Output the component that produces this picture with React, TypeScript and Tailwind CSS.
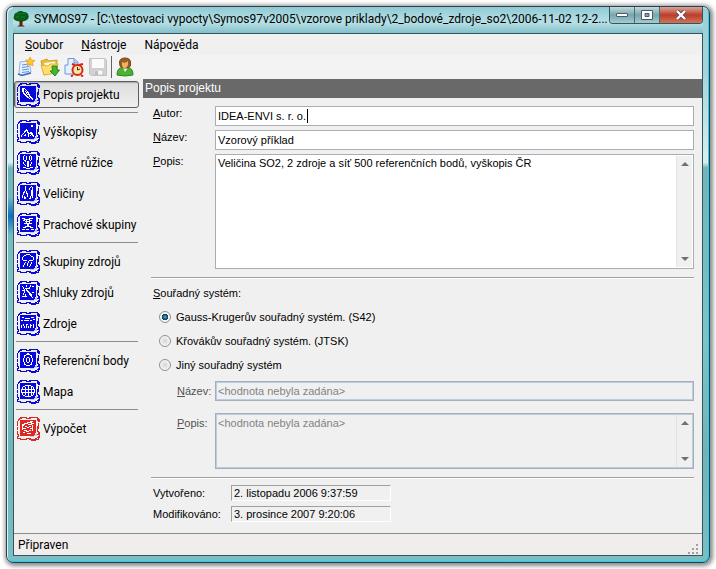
import { useState, type ReactNode } from "react";
import clsx from "clsx";

type IconProps = { color?: string; children: ReactNode };

// Stamp-like frame shared by all sidebar icons
const StampIcon = ({ color = "#0808d8", children }: IconProps) => (
  <svg width="23" height="24" viewBox="0 0 23 24" shapeRendering="crispEdges" className="shrink-0" aria-hidden="true">
    <path d="M3 0.5H10M9 1.5H14M12 0.5H21M2 1.5H5M1 2.5H3M1 3.5H2M0.5 4V9M0.5 10V13M0.5 14V18M1.5 17V20M0.5 19V22M1 21.5H4M3 22.5H10M9 21.5H14M12 22.5H21M14 23.5H19" stroke={color} fill="none" />
    <path d="M20.5 1V4M21.5 1V5M22.5 2V5M21.5 6V12M20.5 9V15M21.5 14V18M22.5 15V21M21.5 19V23M20 20.5H21M18 21.5H20M20.5 17V18" stroke={color} fill="none" />
    <path d="M3 3H19V16H18V18H17V19H3Z" fill={color} />
    <path d="M19 16H20V19H17V20H13V19H17V18H18V17H19Z" fill="#c4c4f2" />
    <g stroke="#fff" fill="none">{children}</g>
  </svg>
);

const icons = {
  project: (
    <StampIcon>
      <path d="M5.5 5V9M6.5 5V11M7.5 5V6M8.5 6V7M9.5 7V8M10.5 8V10M11.5 9V12M12.5 11V14M7.5 10V12M8.5 11V13M9.5 12V14M10.5 13V15M11.5 14V15M8.5 8V9M9.5 9V11M10.5 11V12M13.5 13V15M14.5 14V16M15.5 15V17M12.5 15V16" />
    </StampIcon>
  ),
  terrain: (
    <StampIcon>
      <path d="M4.5 15V17M5.5 14V15M6.5 13V14M7.5 11V13M8.5 10V12M9.5 9V11M10.5 10V13M11.5 12V15M12.5 13V14M13.5 12V14M14.5 12V15M15.5 13V16M16.5 15V17M8.5 14V16M7.5 15V16M11.5 15V17M13.5 15V16M14 5.5H16M14 6.5H16" />
    </StampIcon>
  ),
  wind: (
    <StampIcon>
      <path d="M6.5 5V9M7.5 4V5M7.5 9V10M9.5 5V9M8.5 9V11M12.5 5V9M13.5 4V5M14.5 5V9M13.5 9V10M10.5 10V16M11.5 10V16M6.5 11V13M7.5 13V14M8.5 14V15M13.5 13V15M14.5 11V13M6 16.5H9M13 16.5H16M9 17.5H13" />
    </StampIcon>
  ),
  values: (
    <StampIcon>
      <path d="M8.5 4V9M7.5 9V11M6.5 10V13M9.5 9V12M5.5 13V16M10.5 11V15M7.5 14V17M8.5 15V17M12.5 6V8M13.5 5V6M14.5 4V5M15.5 5V16M14.5 8V14M13.5 14V17M12.5 16V17" />
    </StampIcon>
  ),
  dust: (
    <StampIcon>
      <path d="M5 5.5H8M12 5.5H16M7 6.5H13M6 7.5H8M13 7.5H15M8 8.5H13M9.5 6V10M12.5 6V10M7 10.5H15M10.5 10V13M11.5 11V13M8 13.5H14M6 14.5H9M13 14.5H16M5 16.5H8M9 16.5H12M14 16.5H17" />
    </StampIcon>
  ),
  groups: (
    <StampIcon>
      <path d="M9 4.5H13M7 5.5H9M13 5.5H14M6 6.5H7M14 6.5H16M5.5 7V10M16.5 7V10M6 10.5H10M12 10.5H16M8.5 12V13M7.5 13V15M11.5 11V13M10.5 13V16M14.5 12V14M13.5 14V16M6.5 15V17M12.5 16V17" />
    </StampIcon>
  ),
  clusters: (
    <StampIcon>
      <path d="M5.5 5V6M6.5 6V8M9.5 4V6M13.5 4V6M12.5 6V8M15 5.5H17M5 9.5H8M8 7.5H12M7.5 8V12M9.5 8V10M10.5 9V11M11.5 10V12M12.5 11V14M13.5 12V15M14.5 13V16M6.5 12V14M5 15.5H10M8.5 13V15M15 11.5H17M15.5 16V17" />
    </StampIcon>
  ),
  sources: (
    <StampIcon>
      <path d="M5 5.5H7M8 6.5H13M14 5.5H17M4 8.5H6M7 8.5H12M13 8.5H15M16 7.5H18M4.5 13V16M6.5 12V14M7.5 14V16M9.5 12V16M10.5 12V13M11.5 14V16M13.5 12V16M14.5 13V14M16.5 12V16" />
    </StampIcon>
  ),
  reference: (
    <StampIcon>
      <path d="M10 4.5H12M9 5.5H13M7 6.5H9M13 6.5H15M7.5 7V9M14.5 7V9M6.5 9V13M15.5 9V13M7.5 13V15M14.5 13V15M7 15.5H9M13 15.5H15M9 16.5H13M10 8.5H12M9.5 9V13M12.5 9V13M10 13.5H12" />
    </StampIcon>
  ),
  map: (
    <StampIcon>
      <path d="M8 5.5H14M6 6.5H8M14 6.5H16M5.5 7V9M16.5 7V9M4.5 9V13M17.5 9V13M5.5 13V15M16.5 13V15M6 15.5H8M14 15.5H16M8 16.5H14M11.5 5V17M8.5 7V15M14.5 7V15M5 9.5H18M5 12.5H18" />
    </StampIcon>
  ),
  compute: (
    <StampIcon color="#dc2820">
      <path d="M13 4.5H16M10 5.5H15M7 6.5H11M14 6.5H17M5 7.5H8M11 7.5H15M5 8.5H7M8 9.5H10M12 9.5H14M5.5 9V13M6 11.5H9M10 10.5H12M13 11.5H16M15.5 8V14M7 13.5H10M12 13.5H14M6 15.5H8M9 14.5H12M10 16.5H14" />
    </StampIcon>
  ),
};

const sections = [
  [{ label: "Popis projektu", icon: icons.project }],
  [
    { label: "Výškopisy", icon: icons.terrain },
    { label: "Větrné růžice", icon: icons.wind },
    { label: "Veličiny", icon: icons.values },
    { label: "Prachové skupiny", icon: icons.dust },
  ],
  [
    { label: "Skupiny zdrojů", icon: icons.groups },
    { label: "Shluky zdrojů", icon: icons.clusters },
    { label: "Zdroje", icon: icons.sources },
  ],
  [
    { label: "Referenční body", icon: icons.reference },
    { label: "Mapa", icon: icons.map },
  ],
  [{ label: "Výpočet", icon: icons.compute }],
];

const TreeIcon = () => (
  <svg width="16" height="16" viewBox="0 0 16 16" className="shrink-0" aria-hidden="true">
    <path d="M5 9H11L9.500 11V14L12 15.500H4L6.500 14V11Z" fill="#5a2412" />
    <path d="M4 1.500Q7 -1 11 1Q15 1 15.500 4.500Q16.500 8 13 9.500Q10 11 8 9.500Q5 11 2.500 9.500Q-0.500 8 1 5Q1 2 4 1.500Z" fill="#075c17" />
    <path d="M4 3H8M9 2.500H12M3 6H6M8 6H12" stroke="#168029" strokeWidth="1.200" />
  </svg>
);

const NewIcon = () => (
  <svg width="20" height="20" viewBox="0 0 20 20" aria-hidden="true">
    <path d="M4 5L13 4L15 15L6 18L3 17Z" fill="#e8f2ff" stroke="#8cb4ea" />
    <path d="M2 17L6 18.500L15 16" stroke="#3c70bd" strokeWidth="1.500" fill="none" />
    <path d="M6 8L12 7M6 10.500L13 9.500M6 13L13 12M6 15.500L13 14.500" stroke="#5f92d8" />
    <path d="M14 0L15.500 3L19 3.500L16.500 5.500L17 9L14 7L11 8.500L12 5L9.500 3L13 3Z" fill="#ffc928" stroke="#eb9414" strokeWidth=".7" />
  </svg>
);

const OpenIcon = () => (
  <svg width="20" height="20" viewBox="0 0 20 20" aria-hidden="true">
    <path d="M1 4L7 2L9 4L17 3V15L4 18Z" fill="#e9bc38" stroke="#d2a327" />
    <path d="M4 6L15 4.500L16 11L6 13Z" fill="#fff8dc" />
    <path d="M1 8L8 9L10 7L18 7L16 16L4 18Z" fill="#ffdf6b" stroke="#dcb33a" />
    <path d="M12 9H17V13H19.500L15 19L10 14H12.500Z" fill="#43b735" stroke="#27861f" />
  </svg>
);

const ScheduleIcon = () => (
  <svg width="20" height="20" viewBox="0 0 20 20" aria-hidden="true">
    <path d="M4 1.500H10L14 5V17H1V8H4Z" fill="#e5f0ff" stroke="#6e97d9" />
    <path d="M10 2V6H14" fill="#b7d1f5" stroke="#6e97d9" />
    <path d="M8 7L11 8M19 7L15 8M9 18L7 19.500M17 18L19 19.500" stroke="#cf2418" strokeWidth="2" />
    <circle cx="13.500" cy="13" r="5" fill="#ffe6a0" stroke="#d4281b" strokeWidth="2" />
    <path d="M13.500 10V13L16 12" stroke="#473018" fill="none" />
  </svg>
);

const SaveIcon = () => (
  <svg width="20" height="20" viewBox="0 0 20 20" aria-hidden="true">
    <path d="M1.500 1.500H17L18.500 3V18.500H3L1.500 17Z" fill="#d2d2d2" stroke="#c2c2c2" />
    <path d="M4 2H16V11H4Z" fill="#fafafa" />
    <path d="M6 13H15V18H6Z" fill="#f8f8f8" stroke="#c4c4c4" />
    <path d="M7 14H10V18H7Z" fill="#bcbcbc" />
  </svg>
);

const UserIcon = () => (
  <svg width="20" height="20" viewBox="0 0 20 20" aria-hidden="true">
    <path d="M2 18Q2 11 7 10.500H13Q18 11 18 18Q10 20 2 18Z" fill="#4bb332" stroke="#2f8422" />
    <path d="M8 11L10 15L13 11Z" fill="#e8f6df" />
    <path d="M4.500 5Q5 1 10 1Q15 1 15.500 5V9L13 11H8L5 9Z" fill="#9a5c22" stroke="#77461a" />
    <path d="M7 5Q10 7 13 4V8Q12 11 10 11.500Q7 11 7 8Z" fill="#f0b060" />
  </svg>
);

const Arrow = ({ down = false }: { down?: boolean }) => (
  <svg width="8" height="4" viewBox="0 0 8 4" aria-hidden="true">
    <path d={down ? "M0 0H8L4 4Z" : "M4 0L8 4H0Z"} fill="#707070" />
  </svg>
);

const ScrollTrack = () => (
  <div className="pointer-events-none absolute inset-y-[2px] right-[2px] flex w-4 flex-col items-center justify-between border-l border-[#e2e2e2] bg-[#f0f0f0] py-[6px]">
    <Arrow />
    <Arrow down />
  </div>
);

const Rule = () => <hr className="border-0 border-t border-[#a0a0a0] shadow-[0_1px_0_#fff]" />;

const systems = [
  "Gauss-Krugerův souřadný systém. (S42)",
  "Křovákův souřadný systém. (JTSK)",
  "Jiný souřadný systém",
];

const fieldBase = "block w-full resize-none rounded-none border px-[2px] outline-none";
const field = "border-[#abadb3] bg-white";
const fieldOff = "border-[#abadb3] bg-[#f0f0f0] text-[#838383] shadow-[inset_0_0_0_1px_#b5cfe7]";
const stamp = "h-4 border border-t-[#a0a0a0] border-r-white border-b-white border-l-[#a0a0a0] pl-[2px] leading-[14px]";
const toolButton = "flex h-6 w-6 items-center justify-center";

export default function App() {
  const [active, setActive] = useState("Popis projektu");
  const [system, setSystem] = useState(0);

  return (
    <div className="min-h-screen bg-white p-[6px] font-[Roboto,'Open_Sans',sans-serif] text-[12px] leading-4 text-black">
      <div className="rounded-[7px] border border-[#25434a] px-[6px] pb-[6px] shadow-[inset_1px_1px_0_#dff4f6,inset_-1px_-1px_0_#25cdf0,1px_1px_4px_2px_#8a8a8a] [background:linear-gradient(transparent,#0a6fc4,transparent)_0_190px/7px_38px_no-repeat,linear-gradient(180deg,#9bd0d8_0%,#a5d5dc_12%,#d8eef0_28%,#6fb5bb_29%,#7cc4c9_60%,#6fb4ba_80%,#7abfc5_100%)]">
        <header className="relative flex h-[26px] items-start bg-[linear-gradient(180deg,#8fc8d2_0%,#a9d9e0_35%,#b7e0e5_60%,#82bfca_100%)]">
          <div className="flex h-6 min-w-0 flex-1 items-center gap-[5px]">
            <TreeIcon />
            <h1 className="whitespace-nowrap">SYMOS97 - [C:\testovaci vypocty\Symos97v2005\vzorove priklady\2_bodové_zdroje_so2\2006-11-02 12-2...</h1>
          </div>
          <div className="flex h-[17px] shrink-0 overflow-hidden rounded-b-[4px] border border-t-0 border-[#35545c]">
            <button aria-label="Minimalizovat" className="flex w-[25px] items-center justify-center border-r border-[#4b6c75] bg-linear-to-b from-[#c5dadd] via-[#75a6ad] to-[#a4ccd1]">
              <span className="h-[4px] w-3 rounded-[1px] border border-[#4b5867] bg-white" />
            </button>
            <button aria-label="Maximalizovat" className="flex w-[25px] items-center justify-center border-r border-[#4b6c75] bg-linear-to-b from-[#c5dadd] via-[#75a6ad] to-[#a4ccd1]">
              <svg width="12" height="10" viewBox="0 0 12 10" aria-hidden="true">
                <path d="M.5.500H11.500V9.500H.5Z" fill="#fff" stroke="#4b5867" />
                <path d="M4 3.500H8V6.500H4Z" fill="#86a5af" stroke="#4b5867" />
              </svg>
            </button>
            <button aria-label="Zavřít" className="flex w-[42px] items-center justify-center bg-linear-to-b from-[#d6a497] via-[#bb3c29] to-[#cf7459]">
              <svg width="12" height="10" viewBox="0 0 12 10" aria-hidden="true">
                <path d="M2 1L10 9M10 1L2 9" stroke="#5c4650" strokeWidth="4" />
                <path d="M2 1L10 9M10 1L2 9" stroke="#fff" strokeWidth="2.400" />
              </svg>
            </button>
          </div>
        </header>

        <div className="border border-[#34565c] bg-[#f0f0f0]">
          <nav className="flex h-[21px] items-center gap-[18px] pl-[11px]">
            <button><u>S</u>oubor</button>
            <button><u>N</u>ástroje</button>
            <button>Nápo<u>v</u>ěda</button>
          </nav>

          <div className="flex h-6 items-center bg-[#f3f3f3]">
            <button aria-label="Nový" className={toolButton}><NewIcon /></button>
            <button aria-label="Otevřít" className={toolButton}><OpenIcon /></button>
            <button aria-label="Plánovač" className={toolButton}><ScheduleIcon /></button>
            <button aria-label="Uložit" className={toolButton} disabled><SaveIcon /></button>
            <span className="mx-px h-[22px] w-px bg-[#606060]" />
            <button aria-label="Uživatel" className={toolButton}><UserIcon /></button>
          </div>

          <div className="flex">
            <aside className="w-[129px] shrink-0">
              {sections.map((items, i) => (
                <div key={i}>
                  {i > 0 && <hr className="mt-[2px] mr-[5px] mb-[3px] ml-[2px] border-0 border-t border-[#8c8c8c]" />}
                  {items.map(({ label, icon }) => (
                    <div key={label} className="flex h-[31px] items-center pr-1">
                      <button
                        onClick={() => setActive(label)}
                        className={clsx(
                          "flex h-[27px] w-full items-center gap-[3px] rounded-[3px] border pl-[2px] whitespace-nowrap",
                          active === label
                            ? "border-[#5e5e5e] bg-linear-to-b from-[#dcdcdc] to-[#f0f0f0] shadow-[inset_1px_1px_1px_#a8a8a8]"
                            : "border-transparent",
                        )}
                      >
                        {icon}
                        {label}
                      </button>
                    </div>
                  ))}
                </div>
              ))}
            </aside>

            <main className="min-w-0 flex-1 font-['Liberation_Sans',sans-serif] text-[11px]">
              <h2 className="h-[19px] bg-[#696969] pl-[2px] text-[12px] leading-[19px] text-white">Popis projektu</h2>

              <form className="px-2 pt-2" onSubmit={(e) => e.preventDefault()}>
                <div className="grid grid-cols-[64px_1fr] gap-y-1">
                  <label htmlFor="author" className="pl-[2px] leading-[14px]"><u>A</u>utor:</label>
                  <div className="relative">
                    <input id="author" defaultValue="IDEA-ENVI s. r. o." className={clsx(fieldBase, field, "h-5")} />
                    <span className="absolute top-[3px] left-[92px] h-[14px] w-px bg-black" />
                  </div>
                  <label htmlFor="name" className="pl-[2px] leading-[14px]"><u>N</u>ázev:</label>
                  <input id="name" defaultValue="Vzorový příklad" className={clsx(fieldBase, field, "h-5")} />
                  <label htmlFor="desc" className="pl-[2px] leading-[14px]"><u>P</u>opis:</label>
                  <div className="relative">
                    <textarea id="desc" defaultValue="Veličina SO2, 2 zdroje a síť 500 referenčních bodů, vyškopis ČR" className={clsx(fieldBase, field, "h-[115px]")} />
                    <ScrollTrack />
                  </div>
                </div>

                <div className="mt-2"><Rule /></div>

                <fieldset className="pl-[2px]">
                  <legend className="pt-[7px]"><u>S</u>ouřadný systém:</legend>
                  <div className="pt-1 pl-[6px]">
                    {systems.map((label, i) => (
                      <label key={label} className="flex h-6 items-center gap-[5px]">
                        <input
                          type="radio"
                          name="system"
                          checked={system === i}
                          onChange={() => setSystem(i)}
                          className="h-3 w-3 appearance-none rounded-full border border-[#8e8f8f] bg-[radial-gradient(circle,#d0d3d8_0%,#f4f4f4_65%)] checked:bg-[radial-gradient(circle,#4fb5e0_0%,#14506f_32%,#0d3a58_42%,#f4f4f4_50%)]"
                        />
                        {label}
                      </label>
                    ))}
                  </div>
                </fieldset>

                <div className="mt-1 grid grid-cols-[64px_1fr] gap-y-3">
                  <label htmlFor="sys-name" className="pt-[2px] pl-[26px] text-[#505050]"><u>N</u>ázev:</label>
                  <input id="sys-name" disabled defaultValue="<hodnota nebyla zadána>" className={clsx(fieldBase, fieldOff, "h-5")} />
                  <label htmlFor="sys-desc" className="pt-[2px] pl-[26px] text-[#505050]"><u>P</u>opis:</label>
                  <div className="relative">
                    <textarea id="sys-desc" disabled defaultValue="<hodnota nebyla zadána>" className={clsx(fieldBase, fieldOff, "h-14 py-px")} />
                    <ScrollTrack />
                  </div>
                </div>

                <div className="mt-2"><Rule /></div>

                <div className="grid grid-cols-[78px_160px] items-center gap-y-[5px] pt-[7px] pb-[11px] pl-[2px]">
                  <label htmlFor="created">Vytvořeno:</label>
                  <output id="created" className={stamp}>2. listopadu 2006 9:37:59</output>
                  <label htmlFor="modified">Modifikováno:</label>
                  <output id="modified" className={stamp}>3. prosince 2007 9:20:06</output>
                </div>
              </form>
            </main>
          </div>

          <footer className="flex h-[22px] items-center justify-between border-t border-[#8c8c8c] bg-[#f1edec] pr-[3px] pl-1">
            <span>Připraven</span>
            <svg width="11" height="11" viewBox="0 0 11 11" className="self-end" aria-hidden="true">
              <path d="M8 0H10V2H8ZM4 4H6V6H4ZM8 4H10V6H8ZM0 8H2V10H0ZM4 8H6V10H4ZM8 8H10V10H8Z" fill="#a0a0a0" />
            </svg>
          </footer>
        </div>
      </div>
    </div>
  );
}
